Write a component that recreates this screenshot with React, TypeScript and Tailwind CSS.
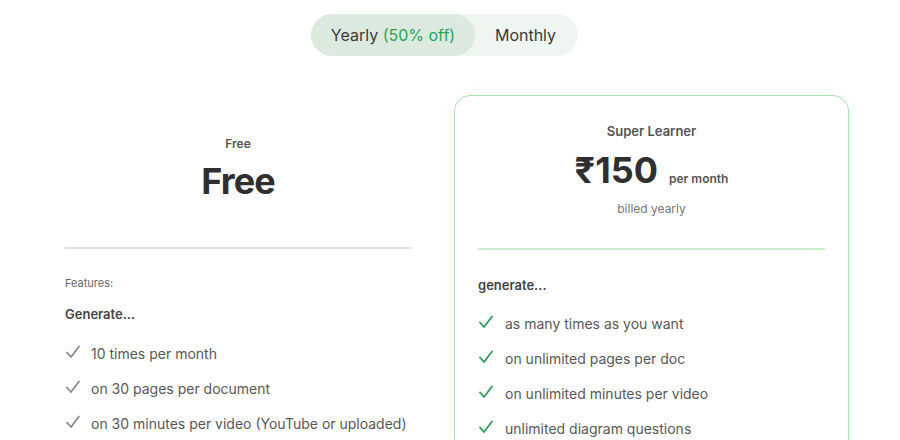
import React from "react";

function Check({ color }: { color: string }) {
  return (
    <svg width="16" height="14" viewBox="0 0 16 14" fill="none" className="shrink-0 mt-[-4px]">
      <polyline points="2,7.5 6,12 14,1.5" stroke={color} strokeWidth="1.8" strokeLinecap="round" strokeLinejoin="round" />
    </svg>
  );
}

const freeItems = [
  "10 times per month",
  "on 30 pages per document",
  "on 30 minutes per video (YouTube or uploaded)",
];

const proItems = [
  "as many times as you want",
  "on unlimited pages per doc",
  "on unlimited minutes per video",
  "unlimited diagram questions",
];

export default function App() {
  return (
    <div className="w-[900px] h-[440px] overflow-hidden bg-white font-['Inter',sans-serif]">
      <div className="pt-[14px] flex justify-center pr-[11px]">
        <div className="flex h-[42px] rounded-full bg-[#eff5f0]">
          <div className="w-[164px] rounded-full bg-[#dce9de] flex items-center justify-center text-[16px] text-[#3a3a3a]">
            Yearly&nbsp;<span className="text-[#2aa35a]">(50% off)</span>
          </div>
          <div className="w-[103px] flex items-center justify-center text-[16px] text-[#3a3a3a] pr-[2px]">
            Monthly
          </div>
        </div>
      </div>

      <div className="mt-[39px] flex gap-[19px] pl-[41px]">
        <div className="w-[394px] px-6 pt-[41px]">
          <div className="text-center text-[12px] leading-[16px] font-semibold text-[#555]">Free</div>
          <div className="mt-[9px] text-center text-[36px] leading-[40px] font-bold tracking-tight text-[#2f2f2f]">Free</div>
          <div className="mt-[46px] h-[2px] bg-[#e2e2e2]" />
          <div className="mt-[27px] text-[11px] leading-[14px] text-[#666]">Features:</div>
          <div className="mt-[15px] text-[13px] leading-[18px] font-semibold text-[#444]">Generate...</div>
          <div className="mt-[21px] flex flex-col gap-[15px]">
            {freeItems.map((t) => (
              <div key={t} className="flex items-center h-[20px]">
                <Check color="#8a8a8a" />
                <span className="ml-[10px] text-[14px] leading-[20px] text-[#585858]">{t}</span>
              </div>
            ))}
          </div>
        </div>

        <div className="w-[395px] h-[360px] border border-[#a9e4b2] rounded-2xl px-[23px] pt-[26px] shadow-[0_0_16px_rgba(0,0,0,0.04)]">
          <div className="text-center text-[13px] leading-[18px] font-semibold text-[#555]">Super Learner</div>
          <div className="mt-[10px] flex items-baseline justify-center">
            <span className="text-[36px] leading-[40px] font-bold text-[#2f2f2f]">₹150</span>
            <span className="ml-[11px] text-[12px] font-semibold text-[#555]">per month</span>
          </div>
          <div className="mt-[11px] text-center text-[12px] leading-[16px] text-[#777]">billed yearly</div>
          <div className="mt-[31px] h-[2px] bg-[#c8efce]" />
          <div className="mt-[26px] text-[13px] leading-[18px] font-semibold text-[#444]">generate...</div>
          <div className="mt-[20px] flex flex-col gap-[15px]">
            {proItems.map((t) => (
              <div key={t} className="flex items-center h-[20px]">
                <Check color="#2e9b57" />
                <span className="ml-[11px] text-[14px] leading-[20px] text-[#585858]">{t}</span>
              </div>
            ))}
          </div>
        </div>
      </div>
    </div>
  );
}
